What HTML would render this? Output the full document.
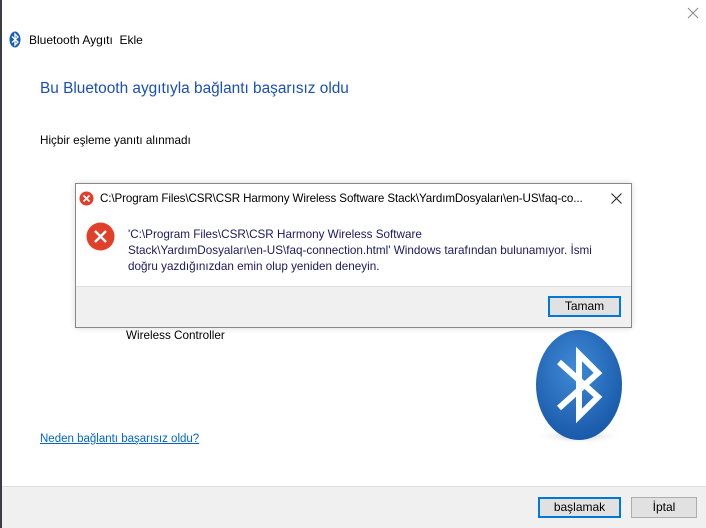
<!DOCTYPE html>
<html><head><meta charset="utf-8"><style>
*{margin:0;padding:0;box-sizing:border-box}
body{width:706px;height:528px;overflow:hidden;background:#fff;position:relative;font-family:"Liberation Sans",sans-serif;color:#000;font-size:12px}
.a{position:absolute;white-space:nowrap}
.btn{position:absolute;background:#e1e1e1;border:1px solid #adadad;text-align:center;line-height:18px;font-size:12px}
.btn.d{border:2px solid #0078d7;line-height:16px}
</style></head><body>
<div class="a" style="left:0;top:0;width:2px;height:528px;background:#3a3d44"></div>
<svg class="a" style="left:9px;top:31px" width="12" height="17" viewBox="0 0 12 17"><ellipse cx="6" cy="8.5" rx="5.5" ry="8" fill="#1a5fb4"/><path d="M3 5.5L9 11L6 14V3L9 6L3 11.5" stroke="#fff" stroke-width="1.3" fill="none"/></svg>
<div class="a" style="left:29px;top:33px;font-size:12px">Bluetooth Aygıtı&nbsp; Ekle</div>
<svg class="a" style="left:687px;top:7px" width="12" height="12"><path d="M1 1L11 11M11 1L1 11" stroke="#888" stroke-width="1"/></svg>
<div class="a" style="left:40px;top:80px;font-size:15.4px;color:#1a4fb8">Bu Bluetooth aygıtıyla bağlantı başarısız oldu</div>
<div class="a" style="left:40px;top:134px;font-size:11.7px">Hiçbir eşleme yanıtı alınmadı</div>
<div class="a" style="left:126px;top:329px;font-size:11.7px">Wireless Controller</div>
<div class="a" style="left:40px;top:433px;color:#0066cc;text-decoration:underline;font-size:11.5px">Neden bağlantı başarısız oldu?</div>
<svg class="a" style="left:530px;top:322px" width="100" height="124" viewBox="0 0 100 124">
<defs><radialGradient id="g" cx="0.45" cy="0.35" r="0.7"><stop offset="0" stop-color="#3f8ad6"/><stop offset="1" stop-color="#1656a6"/></radialGradient><radialGradient id="s" cx="0.5" cy="0.5" r="0.5"><stop offset="0" stop-color="#bbb"/><stop offset="1" stop-color="#fff" stop-opacity="0"/></radialGradient></defs>
<ellipse cx="49" cy="114" rx="44" ry="8" fill="url(#s)"/>
<ellipse cx="49" cy="63" rx="43" ry="55" fill="url(#g)"/>
<path d="M29 40L68 75L49 94V32L68 51L29 86" stroke="#fff" stroke-width="6" fill="none" stroke-linejoin="miter"/>
</svg>
<div class="a" style="left:2px;top:486px;width:704px;height:42px;background:#f0f0f0;border-top:1px solid #dfdfdf"></div>
<div class="btn d" style="left:538px;top:497px;width:83px;height:21px">başlamak</div>
<div class="btn" style="left:631px;top:497px;width:66px;height:21px">İptal</div>
<div class="a" style="left:75px;top:183px;width:557px;height:145px;background:#fff;border:1px solid #888;box-shadow:0 0 6px rgba(0,0,0,.15)">
<div class="a" style="left:0;top:102px;width:555px;height:41px;background:#f0f0f0;border-top:1px solid #dfdfdf"></div>
</div>
<svg class="a" style="left:79px;top:191px" width="15" height="15"><circle cx="7.5" cy="7.5" r="7" fill="#e0402a"/><path d="M4.5 4.5L10.5 10.5M10.5 4.5L4.5 10.5" stroke="#fff" stroke-width="1.6"/></svg>
<div class="a" style="left:100px;top:192px;font-size:11.6px;letter-spacing:-0.1px">C:\Program Files\CSR\CSR Harmony Wireless Software Stack\YardımDosyaları\en-US\faq-co...</div>
<svg class="a" style="left:611px;top:193px" width="11" height="11"><path d="M0.5 0.5L10.5 10.5M10.5 0.5L0.5 10.5" stroke="#222" stroke-width="1"/></svg>
<svg class="a" style="left:86px;top:222px" width="29" height="29"><circle cx="14.5" cy="14.5" r="14" fill="#e0402a"/><path d="M9 9L20 20M20 9L9 20" stroke="#fff" stroke-width="2.4"/></svg>
<div class="a" style="left:128px;top:227px;line-height:16px;color:#1a1a60;font-size:11.7px">'C:\Program Files\CSR\CSR Harmony Wireless Software<br>Stack\YardımDosyaları\en-US\faq-connection.html' Windows tarafından bulunamıyor. İsmi<br>doğru yazdığınızdan emin olup yeniden deneyin.</div>
<div class="btn d" style="left:548px;top:296px;width:73px;height:21px">Tamam</div>
</body></html>
